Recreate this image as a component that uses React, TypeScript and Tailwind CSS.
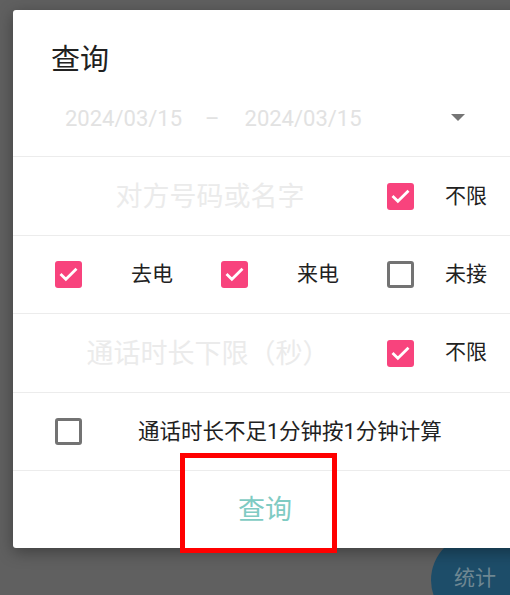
import React from "react";

const font = { fontFamily: "Roboto, 'Noto Sans CJK SC', 'Noto Sans', sans-serif" };

function Check({ on }: { on: boolean }) {
  if (on) {
    return (
      <div className="w-[27px] h-[27px] rounded-[3px] bg-[#f8437d] flex items-center justify-center shrink-0">
        <svg width="21" height="21" viewBox="0 0 24 24">
          <path d="M4 12.5l5 5L20 6.5" fill="none" stroke="#fff" strokeWidth="3.2" strokeLinecap="square" strokeLinejoin="miter" />
        </svg>
      </div>
    );
  }
  return <div className="w-[27px] h-[27px] rounded-[3px] border-[3px] border-[#737373] bg-white shrink-0" />;
}

function Divider() {
  return <div className="h-px bg-[#ececec]" />;
}

export default function App() {
  return (
    <div className="relative w-[510px] h-[595px] overflow-hidden bg-[#606060]" style={font}>
      <div className="absolute left-[431px] top-[534px] w-[92px] h-[92px] rounded-full bg-[#1d4d69] flex items-center justify-center">
        <span className="text-[21px] text-[#6e8792] ml-[-4px] mt-[-2px]">统计</span>
      </div>
      <div className="absolute left-[13px] top-[10px] w-[520px] h-[538px] bg-white rounded-[3px] shadow-[0_4px_16px_rgba(0,0,0,0.35)] flex flex-col">
        <div className="pt-[30px] pl-[38px] h-[70px] text-[29px] leading-[40px] text-[#212121]">查询</div>
        <div className="h-[76px] flex items-center text-[22px] text-[#e2e2e2]">
          <span className="ml-[52px]">2024/03/15</span>
          <span className="ml-[23px]">–</span>
          <span className="ml-[25px]">2024/03/15</span>
          <svg className="ml-[89px]" width="14" height="8" viewBox="0 0 14 8">
            <path d="M0 0h14L7 7z" fill="#757575" />
          </svg>
        </div>
        <Divider />
        <div className="h-[78px] flex items-center">
          <div className="w-[374px] text-center text-[27px] text-[#ebebeb] pl-[20px] mt-[2px]">对方号码或名字</div>
          <Check on />
          <span className="ml-[31px] text-[21px] text-[#212121] mt-[2px]">不限</span>
        </div>
        <Divider />
        <div className="h-[77px] flex items-center pl-[42px] text-[21px] text-[#212121]">
          <Check on />
          <span className="ml-[49px] w-[90px]">去电</span>
          <Check on />
          <span className="ml-[49px] w-[90px]">来电</span>
          <Check on={false} />
          <span className="ml-[31px]">未接</span>
        </div>
        <Divider />
        <div className="h-[78px] flex items-center">
          <div className="w-[374px] text-center text-[27px] text-[#ebebeb] pl-[16px] mt-[2px]">通话时长下限（秒）</div>
          <Check on />
          <span className="ml-[31px] text-[21px] text-[#212121]">不限</span>
        </div>
        <Divider />
        <div className="h-[77px] flex items-center pl-[42px]">
          <Check on={false} />
          <span className="ml-[56px] text-[21.5px] text-[#212121] mt-[2px]">通话时长不足1分钟按1分钟计算</span>
        </div>
        <Divider />
        <div className="flex-1 flex items-center justify-center pr-[10px]">
          <span className="text-[27px] text-[#7fcbc3] ml-[-6px] mt-[2px]">查询</span>
        </div>
      </div>
      <div className="absolute left-[180px] top-[453px] w-[157px] h-[100px] border-[5px] border-[#ff0000]" />
    </div>
  );
}
